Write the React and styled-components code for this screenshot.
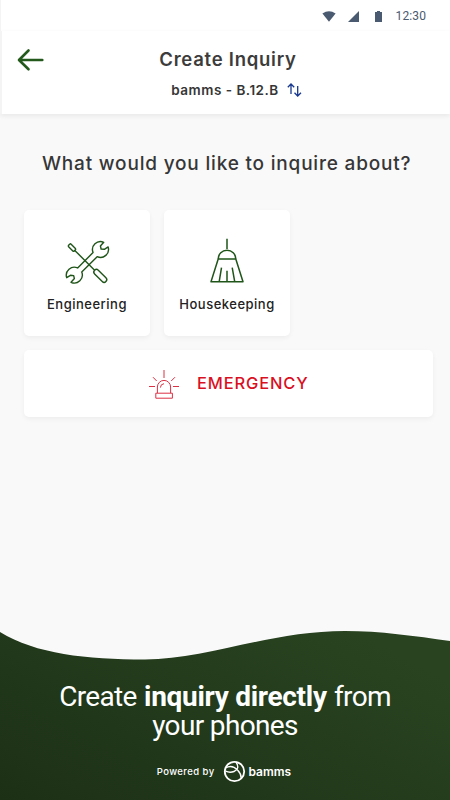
import styled, { createGlobalStyle } from "styled-components";

const GlobalStyle = createGlobalStyle`
    * {
        box-sizing: border-box;
    }
    body {
        margin: 0;
        background: #f9f9f9;
    }
`;

const Screen = styled.div`
    width: 450px;
    height: 800px;
    display: flex;
    flex-direction: column;
    overflow: hidden;
    background: #f9f9f9;
    color: #363636;
    font-family: Inter, "Liberation Sans", sans-serif;
`;

const StatusBar = styled.div`
    height: 31px;
    flex: none;
    display: flex;
    align-items: center;
    justify-content: flex-end;
    padding: 1px 24px 0 0;
    background: #fff;
    border-left: 1px solid #f4f4f4;
    color: #4a5a70;
    font: 12px Roboto, sans-serif;
    letter-spacing: 0.1px;

    & svg {
        margin-right: 12px;
    }
    & svg + svg + svg {
        margin-right: 10px;
    }
`;

const Header = styled.header`
    height: 83px;
    flex: none;
    display: grid;
    grid-template-columns: 50px 1fr 46px;
    padding-top: 17px;
    background: #fff;
    border-left: 2px solid #f4f4f4;
    box-shadow: 0 2px 5px rgba(0, 0, 0, 0.07);

    & > svg {
        margin: 0 0 0 14px;
    }
`;

const Heading = styled.div`
    display: flex;
    flex-direction: column;
    align-items: center;
    white-space: nowrap;
`;

const Title = styled.h1`
    margin: 0;
    font-size: 18.5px;
    line-height: 23px;
    font-weight: 600;
    letter-spacing: 0.75px;
    color: #3c3c3c;
`;

const Unit = styled.div`
    display: flex;
    align-items: center;
    gap: 8px;
    margin: 10px 0 0 17px;
    height: 18px;
    font-size: 13.5px;
    font-weight: 600;
    letter-spacing: 0.5px;
`;

const Content = styled.main`
    flex: 1;
    display: flex;
    flex-direction: column;
    padding: 36px 17px 0 24px;
`;

const Question = styled.h2`
    margin: 0 0 32px 18px;
    font-size: 19px;
    line-height: 28px;
    font-weight: 500;
    letter-spacing: 0.81px;
    white-space: nowrap;
`;

const Categories = styled.div`
    display: flex;
    gap: 14px;
`;

const Card = styled.button`
    border: 0;
    padding: 0;
    background: #fff;
    border-radius: 5px;
    box-shadow: 0 2px 5px rgba(0, 0, 0, 0.05);
    font-family: inherit;
`;

const CategoryCard = styled(Card)`
    width: 126px;
    height: 126px;
    display: flex;
    flex-direction: column;
    align-items: center;
    padding-top: 27px;
`;

const CategoryName = styled.span`
    margin-top: 10px;
    font-size: 13px;
    line-height: 18px;
    font-weight: 450;
    letter-spacing: 0.5px;
    color: #222;
`;

const EmergencyCard = styled(Card)`
    display: flex;
    align-items: center;
    height: 67px;
    margin-top: 14px;
    padding-left: 124px;
    color: #d9101f;
    font-size: 16.5px;
    font-weight: 500;
    letter-spacing: 0.85px;

    & span {
        margin: 0 0 2px 17px;
    }
`;

const Footer = styled.footer`
    position: relative;
    height: 170px;
    flex: none;
    display: flex;
    flex-direction: column;
    align-items: center;
    padding-top: 52px;
    color: #fff;
`;

const Wave = styled.svg`
    position: absolute;
    inset: 0;
`;

const Slogan = styled.div`
    position: relative;
    font-family: Roboto, sans-serif;
    font-size: 28px;
    line-height: 29px;
    font-weight: 400;
    text-align: center;
    white-space: nowrap;
    letter-spacing: -0.65px;

    & b {
        margin: 0 1px;
        font-weight: 700;
        letter-spacing: -0.3px;
    }
`;

const PoweredBy = styled.div`
    position: relative;
    display: flex;
    align-items: center;
    margin: 19px 0 0 -2px;
    height: 24px;
    font-size: 9.5px;
    font-weight: 500;
    letter-spacing: 0.42px;

    & svg {
        margin: 0 3px 0 8px;
    }
    & strong {
        font-size: 12px;
        font-weight: 600;
        letter-spacing: 0;
    }
`;

const BackIcon = () => (
    <svg width="30" height="24" fill="none" stroke="#235a1c" strokeWidth="2.6" strokeLinecap="round" strokeLinejoin="round">
        <path d="M26.3 12H3.3M12.5 2.5 3 12l9.5 9.3" />
    </svg>
);

const SwapIcon = () => (
    <svg width="15" height="14" fill="none" stroke="#17378f" strokeWidth="1.3">
        <path d="M4 11V1M.8 4.3 4 1l3.2 3.3M10.7 3v10M7.5 9.8l3.2 3.2 3.3-3.2" />
    </svg>
);

const ToolsIcon = () => (
    <svg width="48" height="48" fill="none" stroke="#1f5519" strokeWidth="1.4" strokeLinejoin="round">
        <g transform="translate(24.4 25.3) rotate(-45)">
            <path d="M-10.9-2.9H10.9A8 8 0 0 1 25.7-2.6L20.7-2.3 19.1.3 21.2 2.8 25.5 3.8A8 8 0 0 1 10.9 2.9H-10.9A8 8 0 0 1-25.7 2.6L-20.7 2.3-19.1-.3-21.2-2.8-25.5-3.8A8 8 0 0 1-10.9-2.9Z" />
        </g>
        <g transform="translate(24.2 25.8) rotate(45)">
            <rect x="-25.5" y="-1.8" width="8" height="3.6" rx="1" />
            <path d="M-17.5 0H10.5" />
            <rect x="10.5" y="-2.6" width="16" height="5.2" rx="2.6" />
        </g>
    </svg>
);

const BroomIcon = () => (
    <svg width="48" height="48" fill="none" stroke="#1f5519" strokeWidth="1.5" strokeLinejoin="round">
        <path d="M24 1.7V12M15.2 22a8.8 8.8 0 0 1 17.6 0ZM15.2 22 8 44.7h32L32.8 22M18.5 30.7l-2.3 14M24 33.7v11M29.2 30.7l2.5 14" />
    </svg>
);

const SirenIcon = () => (
    <svg width="32" height="32" fill="none" stroke="#dc3044" strokeWidth="1">
        <path d="M16 2v8M5 9.2 8.7 13M27 9.2 23.2 13M1 18.5h6M25 18.5h6M9.4 25v-6a6.6 6.6 0 0 1 13.2 0v6M12.4 19.6a4 4 0 0 1 3.6-3.9M7.8 25.2h16.6v5H7.8Z" />
    </svg>
);

const LogoIcon = () => (
    <svg width="23" height="23" fill="none" stroke="#fff" strokeWidth="1.4">
        <circle cx="11.5" cy="11.5" r="9.7" strokeWidth="1.8" />
        <path d="M13 2c3 4.5 2 7.8-2 9.5-3 1.2-6 .8-8.5-.3M2.5 8c4-2.4 8.7-1.5 12 2 2.5 2.5 3.7 5 3.7 8" />
    </svg>
);

const App = () => {
    return (
        <Screen>
            <GlobalStyle />
            <StatusBar>
                <svg width="14" height="11" fill="currentColor">
                    <path d="M.4 2.6Q7-2 13.6 2.6L7 10.8Z" />
                </svg>
                <svg width="11" height="11" fill="currentColor">
                    <path d="M11 0v11H0Z" />
                </svg>
                <svg width="15" height="11" fill="currentColor">
                    <path d="M4 1h2V0h3v1h2v10H4Z" />
                </svg>
                12:30
            </StatusBar>
            <Header>
                <BackIcon />
                <Heading>
                    <Title>Create Inquiry</Title>
                    <Unit>
                        bamms - B.12.B
                        <SwapIcon />
                    </Unit>
                </Heading>
            </Header>
            <Content>
                <Question>What would you like to inquire about?</Question>
                <Categories>
                    <CategoryCard>
                        <ToolsIcon />
                        <CategoryName>Engineering</CategoryName>
                    </CategoryCard>
                    <CategoryCard>
                        <BroomIcon />
                        <CategoryName>Housekeeping</CategoryName>
                    </CategoryCard>
                </Categories>
                <EmergencyCard>
                    <SirenIcon />
                    <span>EMERGENCY</span>
                </EmergencyCard>
            </Content>
            <Footer>
                <Wave width="450" height="170">
                    <defs>
                        <linearGradient id="green" x1="0" y1="1" x2="1" y2="0.3">
                            <stop offset="0" stopColor="#1c3016" />
                            <stop offset="1" stopColor="#294320" />
                        </linearGradient>
                    </defs>
                    <path
                        fill="url(#green)"
                        d="M0 2C36 24 86 29.5 145 29.5C205 29.5 270 1 345 1C380 1 415 6 450 11V170H0Z"
                    />
                </Wave>
                <Slogan>
                    <div>
                        Create <b>inquiry directly</b> from
                    </div>
                    <div>your phones</div>
                </Slogan>
                <PoweredBy>
                    Powered by
                    <LogoIcon />
                    <strong>bamms</strong>
                </PoweredBy>
            </Footer>
        </Screen>
    );
};

export default App;
